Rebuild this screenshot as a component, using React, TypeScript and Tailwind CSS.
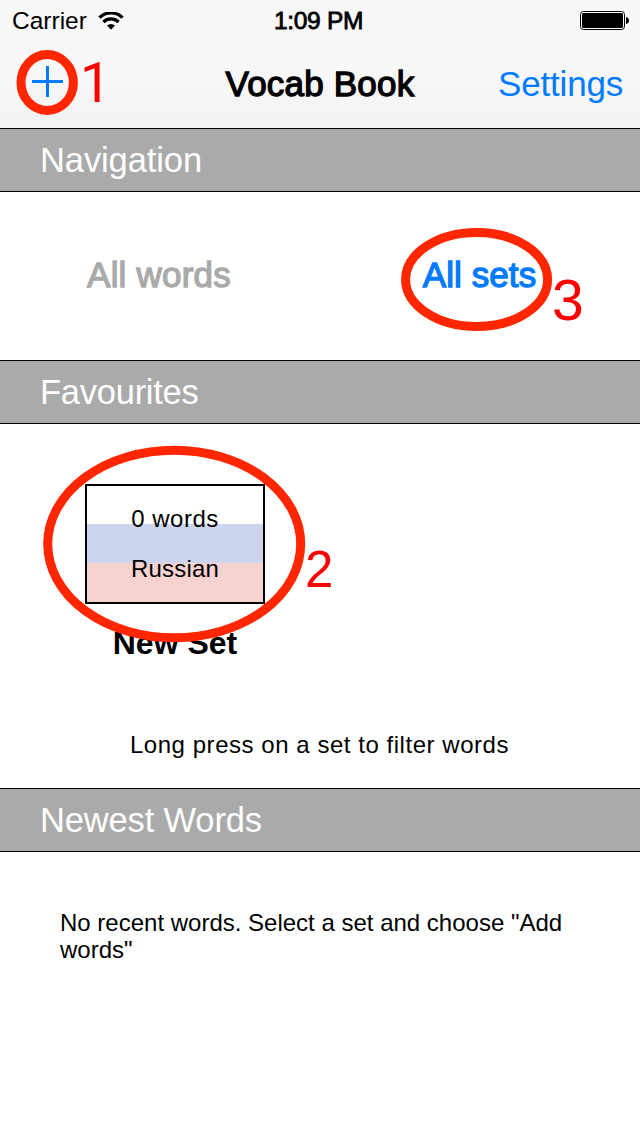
function SectionBar({ title, tracking }: { title: string; tracking: string }) {
  return (
    <h2 className={`h-16 border-y border-black bg-[#aaaaaa] pl-10 text-[34.5px] leading-[63px] whitespace-nowrap text-white ${tracking}`}>
      {title}
    </h2>
  );
}

function Wifi() {
  return (
    <svg className="h-[18px] w-[26px]" viewBox="0 0 26 18" fill="none" stroke="#000">
      <path d="M1.4 5.6A16.6 16.6 0 0 1 24.6 5.6" strokeWidth="3.2" />
      <path d="M5.4 10A11 11 0 0 1 20.6 10" strokeWidth="3.2" />
      <path d="M13 17.8L9 13.6A5.9 5.9 0 0 1 17 13.6Z" fill="#000" stroke="none" />
    </svg>
  );
}

function Battery() {
  return (
    <svg className="h-[19px] w-[50px]" viewBox="0 0 50 19">
      <rect x="0.5" y="0.5" width="44" height="18" rx="3" fill="#fff" stroke="#000" />
      <rect x="2" y="2" width="41" height="15" rx="1.5" />
      <path d="M46 6C48 6.3 49 7.5 49 9.5S48 12.7 46 13Z" />
    </svg>
  );
}

export default function App() {
  return (
    <div className="relative h-[1136px] w-[640px] overflow-hidden bg-white font-['Liberation_Sans',Arial,sans-serif] text-black">
      <header className="flex h-32 flex-col bg-linear-to-b from-[#f8f8f8] from-50% to-[#f2f2f2]">
        <div className="grid h-10 grid-cols-3 items-center text-[24.5px] leading-10 whitespace-nowrap">
          <div className="flex items-center gap-[11px] pl-3">
            <span className="pt-px">Carrier</span>
            <Wifi />
          </div>
          <span className="pt-px pr-[3px] text-center tracking-[-0.3px] [-webkit-text-stroke:0.8px]">1:09 PM</span>
          <div className="flex justify-end pr-[10px]">
            <Battery />
          </div>
        </div>
        <div className="grid h-[88px] grid-cols-3 text-[35px] leading-[88px] whitespace-nowrap">
          <button className="flex items-start pt-[26px] pl-8 text-[#007aff]" aria-label="Add">
            <svg className="h-[31px] w-[31px]" viewBox="0 0 31 31" stroke="currentColor" strokeWidth="3">
              <path d="M15.5 0V31M0 15.5H31" />
            </svg>
          </button>
          <h1 className="text-center tracking-[0.2px] [-webkit-text-stroke:1.3px]">Vocab Book</h1>
          <button className="pr-[17px] text-right tracking-[-0.2px] text-[#007aff]">Settings</button>
        </div>
      </header>

      <SectionBar title="Navigation" tracking="tracking-[-0.1px]" />
      <div className="grid h-[168px] grid-cols-2 text-center text-[35px] leading-[166px] whitespace-nowrap">
        <span className="pr-[2px] tracking-[0.2px] text-[#aaaaaa] [-webkit-text-stroke:1.3px]">All words</span>
        <span className="pr-[1px] tracking-[0.1px] text-[#007aff] [-webkit-text-stroke:1.3px]">All sets</span>
      </div>

      <SectionBar title="Favourites" tracking="tracking-[-0.25px]" />
      <div className="flex h-[364px] flex-col pt-[60px]">
        <div className="ml-[85px] flex w-[180px] flex-col items-center">
          <div className="flex h-[120px] w-full flex-col items-center border-2 border-black bg-[linear-gradient(#fff_38px,#ccd5ed_38px,#ccd5ed_77.5px,#f6d3d1_77.5px)] pt-[8px] text-2xl leading-[50px]">
            <span className="tracking-[0.5px]">0 words</span>
            <span className="tracking-[0.2px]">Russian</span>
          </div>
          <span className="pt-[19px] text-[32px] leading-10 font-bold">New Set</span>
        </div>
        <p className="mt-[62px] pr-px text-center text-2xl leading-10 tracking-[0.54px]">Long press on a set to filter words</p>
      </div>

      <SectionBar title="Newest Words" tracking="tracking-[-0.15px]" />
      <p className="w-[600px] pt-[57px] pl-[60px] text-2xl leading-[27px]">
        No recent words. Select a set and choose "Add<br />words"
      </p>

      <svg className="pointer-events-none absolute inset-0" width="640" height="1136" fill="none" stroke="#ff2600" strokeWidth="9">
        <ellipse cx="47.2" cy="82.5" rx="26.2" ry="28" />
        <ellipse cx="476.6" cy="279.5" rx="71" ry="47" />
        <ellipse cx="174.2" cy="544" rx="126.5" ry="93.8" />
      </svg>
      <span className="absolute top-[53px] left-[80px] font-[Roboto] text-[55px] leading-[60px] text-[#ff0000]">1</span>
      <span className="absolute top-[540px] left-[305px] text-[51px] leading-[60px] text-[#ff0000]">2</span>
      <span className="absolute top-[270px] left-[552px] text-[57px] leading-[60px] text-[#ff0000]">3</span>
    </div>
  );
}
